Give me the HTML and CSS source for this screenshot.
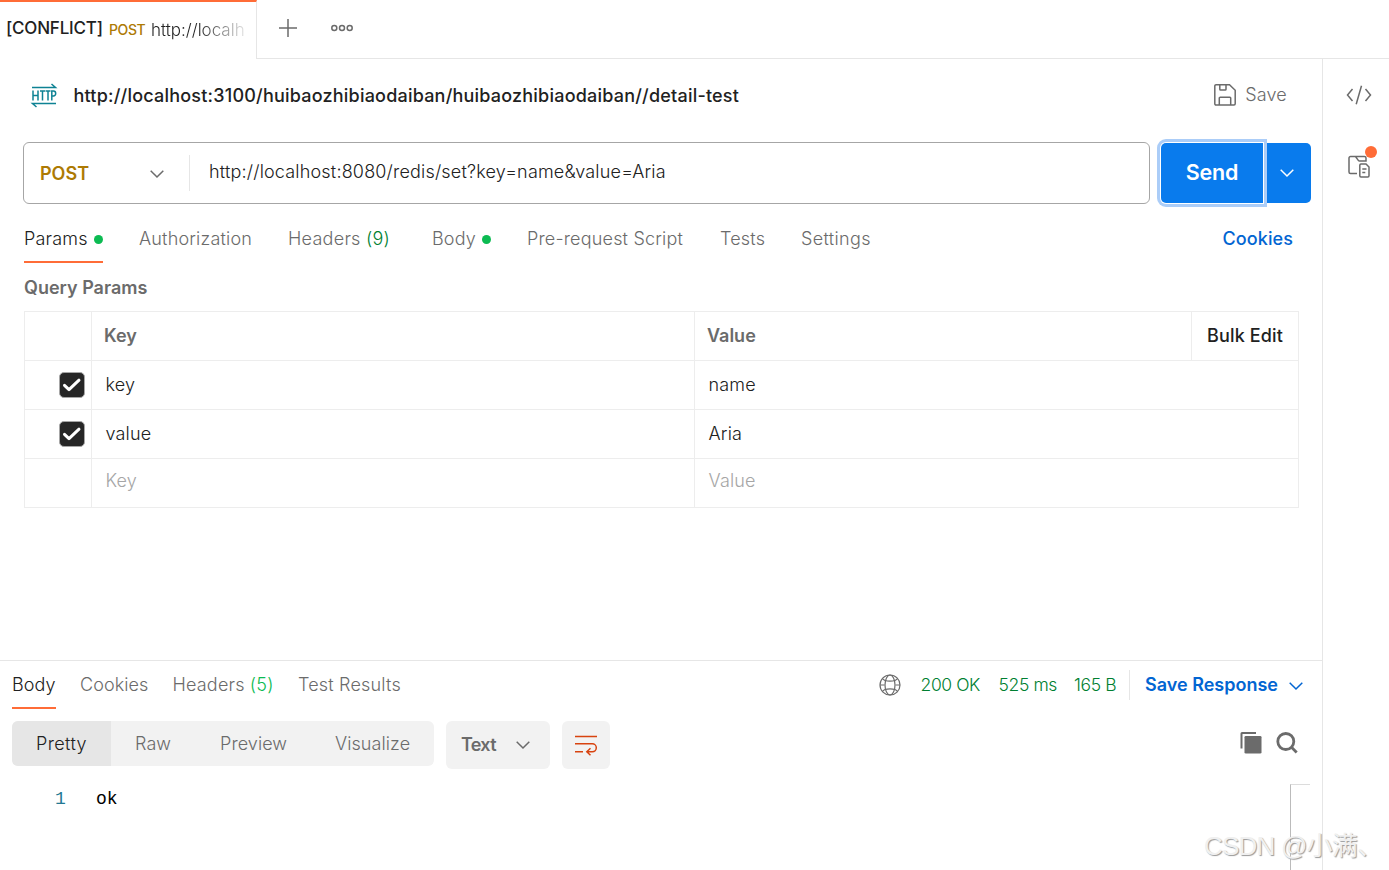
FILE: index.html
```html
<!DOCTYPE html>
<html lang="en">
<head>
<meta charset="utf-8">
<title>API client</title>
<link rel="stylesheet" href="styles.css">
</head>
<body>
<header class="tabbar">
  <div class="tab"><span class="conflict">[CONFLICT]</span><span class="tab-method">POST</span><span class="tab-url">http://localh</span></div>
  <div class="tab-actions">
    <svg class="plus" width="18" height="18" viewBox="0 0 18 18"><path d="M9 0v18M0 9h18"/></svg>
    <svg class="dots" width="22" height="8" viewBox="0 0 22 8"><circle cx="3.3" cy="4" r="2.5"/><circle cx="11" cy="4" r="2.5"/><circle cx="18.7" cy="4" r="2.5"/></svg>
  </div>
</header>
<div class="workspace">
  <main class="main">
    <section class="request">
      <div class="title-row">
        <svg class="http" width="26" height="26" viewBox="0 0 26 26"><path d="M1 4.500h23.500L20.500 1M25 20.500H1.500L5.500 24"/><path d="M2 7.500v10M7 7.500v10M2 12.500h5M9 8h5M11.500 8v9.500M14.500 8h5M17 8v9.500M20.800 17.500V8h1.700a2.200 2.500 0 0 1 0 5h-1.700"/></svg>
        <h1 class="title">http://localhost:3100/huibaozhibiaodaiban/huibaozhibiaodaiban//detail-test</h1>
        <div class="save"><svg width="22" height="22" viewBox="0 0 22 22"><path d="M2 .8h13.500l5.700 5.400v13.600a1.200 1.200 0 0 1-1.200 1.200H2A1.200 1.200 0 0 1 .8 19.800V2A1.200 1.200 0 0 1 2 .8zM5.800 1v4.200a.8.8 0 0 0 .8.8h4.600a.8.8 0 0 0 .8-.8V1M5.300 21v-7a.8.8 0 0 1 .8-.8h9.800a.8.8 0 0 1 .8.8v7"/></svg><span>Save</span></div>
      </div>
      <div class="url-row">
        <div class="url-box">
          <div class="method"><span>POST</span><svg class="chev" width="14" height="8" viewBox="0 0 14 8"><path d="M.7.700 7 7 13.300.700"/></svg></div>
          <div class="url">http://localhost:8080/redis/set?key=name&amp;value=Aria</div>
        </div>
        <div class="send-group">
          <div class="send">Send</div>
          <div class="send-more"><svg width="14" height="8" viewBox="0 0 14 8"><path d="M.7.700 7 7 13.300.700"/></svg></div>
        </div>
      </div>
      <nav class="req-tabs">
        <div class="rt active"><span class="t-params">Params</span><i class="dot"></i></div>
        <div class="rt t-auth">Authorization</div>
        <div class="rt t-headers">Headers <b>(9)</b></div>
        <div class="rt t-body"><span>Body</span><i class="dot"></i></div>
        <div class="rt t-pre">Pre-request Script</div>
        <div class="rt t-tests">Tests</div>
        <div class="rt t-settings">Settings</div>
        <div class="cookies">Cookies</div>
      </nav>
      <h2 class="subtitle">Query Params</h2>
      <div class="table">
        <div class="row head"><div></div><div>Key</div><div>Value</div><div class="bulk">Bulk Edit</div></div>
        <div class="row"><div class="check"><svg width="26" height="26" viewBox="0 0 26 26"><rect x=".5" y=".5" width="25" height="25" rx="4.500"/><path d="m5.500 13.300 4.500 4.300L20 8.200"/></svg></div><div>key</div><div>name</div></div>
        <div class="row"><div class="check"><svg width="26" height="26" viewBox="0 0 26 26"><rect x=".5" y=".5" width="25" height="25" rx="4.500"/><path d="m5.500 13.300 4.500 4.300L20 8.200"/></svg></div><div>value</div><div>Aria</div></div>
        <div class="row empty"><div></div><div>Key</div><div>Value</div></div>
      </div>
    </section>
    <section class="response">
      <div class="res-bar">
        <div class="res-tab s-body">Body</div>
        <div class="res-tab s-cookies">Cookies</div>
        <div class="res-tab s-headers">Headers <b>(5)</b></div>
        <div class="res-tab s-tests">Test Results</div>
        <div class="status">
          <svg class="globe" width="22" height="22" viewBox="0 0 22 22"><circle cx="11" cy="11" r="10"/><ellipse cx="11" cy="11" rx="5" ry="10"/><path d="M3.500 4.500C5.500 8 16.500 8 18.500 4.500M3.500 17.500c2-3.500 13-3.500 15 0M1 11h4.500M16.500 11H21"/></svg>
          <span class="code">200 OK</span><span class="time">525 ms</span><span class="size">165 B</span>
          <div class="save-res"><span>Save Response</span><svg width="14" height="8" viewBox="0 0 14 8"><path d="M.7.700 7 7 13.300.700"/></svg></div>
        </div>
      </div>
      <div class="tools">
        <div class="segmented"><span class="seg on">Pretty</span><span class="seg raw">Raw</span><span class="seg preview">Preview</span><span class="seg visualize">Visualize</span></div>
        <div class="format"><span>Text</span><svg class="chev" width="14" height="8" viewBox="0 0 14 8"><path d="M.7.700 7 7 13.300.700"/></svg></div>
        <div class="wrap"><svg width="22" height="20" viewBox="0 0 22 20"><path d="M0 1.500h22M0 8.800h17.300a4 4 0 0 1 0 8H12M0 16.800h8M15.500 13.300 11.800 16.800l3.700 3.500"/></svg></div>
        <div class="tool-icons">
          <svg width="22" height="22" viewBox="0 0 22 22"><path class="fill" d="M2 0h14v2H2.500v14.500H.5V1.500A1.500 1.500 0 0 1 2 0z"/><rect class="fill" x="4.500" y="4" width="17" height="17.500" rx="1.300"/></svg>
          <svg width="22" height="22" viewBox="0 0 22 22"><circle class="lens" cx="9.800" cy="9.500" r="8"/><path class="lens" d="m15.500 15.300 5.200 5.200"/></svg>
        </div>
      </div>
      <div class="editor"><span class="ln">1</span><span class="src">ok</span><div class="minimap"></div></div>
    </section>
  </main>
  <aside class="side">
    <svg width="26" height="20" viewBox="0 0 26 20"><path d="M6.500 4 1.500 10l5 6M19.500 4l5 6-5 6M15.500.8l-5.300 18.400"/></svg>
    <div class="docs"><svg width="24" height="24" viewBox="0 0 24 24"><path d="M11 18.500H4.500A1.500 1.500 0 0 1 3 17V3a1.500 1.500 0 0 1 1.500-1.500h14A1.500 1.500 0 0 1 20 3v3h-6.500a1.500 1.500 0 0 1-1.200-.6L9.500 1.500"/><path d="M15 9h5l3 3v8.800a1.200 1.200 0 0 1-1.200 1.200H15a1.200 1.200 0 0 1-1.200-1.200V10.200A1.200 1.200 0 0 1 15 9zM16.300 14h4.200M16.300 17.500h3"/></svg><i class="badge"></i></div>
  </aside>
</div>
<div class="watermark">CSDN <span class="handle">@小满、</span></div>
</body>
</html>
```
FILE: styles.css
```css
* { box-sizing: border-box; }
body { margin: 0; width: 1389px; height: 870px; overflow: hidden; position: relative; background: #fff; color: #212121; font: 350 18px/24px Inter, "Liberation Sans", sans-serif; letter-spacing: .18px; display: flex; flex-direction: column; }
h1, h2 { margin: 0; font-size: 18px; }
svg { display: block; flex: none; overflow: visible; fill: none; stroke: #6b6b6b; stroke-width: 1.5; }

.tabbar { display: flex; height: 59px; flex: none; }
.tab { width: 257px; border-top: 2px solid #ff6c37; border-right: 1px solid #e6e6e6; display: flex; padding: 14px 0 0 6px; white-space: nowrap; }
.conflict { width: 103px; font-size: 17px; font-weight: 500; letter-spacing: -.2px; }
.tab-method { width: 42px; padding-top: 2px; font-size: 14px; font-weight: 500; letter-spacing: -.4px; color: #ad7a03; }
.tab-url { padding-top: 2px; font-size: 17px; letter-spacing: 0; color: transparent; background: linear-gradient(90deg, #212121 50%, #e4e4e4 100%); background-clip: text; -webkit-background-clip: text; }
.tab-actions { flex: 1; border-bottom: 1px solid #e6e6e6; display: flex; align-items: center; gap: 34px; padding: 0 0 2px 22px; }

.workspace { flex: 1; display: flex; min-height: 0; }
.main { width: 1322px; display: flex; flex-direction: column; }
.request { height: 601px; flex: none; padding: 0 23px 0 24px; }
.title-row { height: 83px; display: flex; align-items: center; padding: 0 12px 10px 7px; }
.http { stroke: #0e8294; }
.title { margin-left: 16.5px; font-weight: 500; letter-spacing: .21px; }
.save { margin-left: auto; margin-top: -2px; display: flex; gap: 9px; align-items: center; color: #6b6b6b; }
.url-row { display: flex; margin: 0 -12px 0 -1px; height: 62px; justify-content: space-between; align-items: center; }
.url-box { width: 1127px; height: 62px; border: 1px solid #a6a6a6; border-radius: 6px; display: flex; align-items: center; }
.method { width: 166px; height: 36px; border-right: 1px solid #e6e6e6; display: flex; align-items: center; justify-content: space-between; padding: 2px 25px 0 16px; font-weight: 600; letter-spacing: 0; color: #ad7a03; }
.url { padding-left: 19px; margin-top: -3px; }
.send-group { display: flex; width: 150px; height: 60px; }
.send { width: 102px; background: #097bed; color: #fff; border-radius: 5px 0 0 5px; font-size: 21.5px; line-height: 59px; font-weight: 600; letter-spacing: -.2px; text-align: center; box-shadow: 0 0 0 1px #fff, 0 0 0 4px #abcdf8; z-index: 1; }
.send-more { flex: 1; background: #097bed; border-radius: 0 5px 5px 0; display: flex; align-items: center; justify-content: center; }
.send-more svg { stroke: #fff; }

.req-tabs { height: 59px; display: flex; color: #6b6b6b; padding-top: 23px; }
.rt { height: 36px; white-space: nowrap; flex: none; }
.rt.active { display: flex; width: 79px; margin-right: 36px; justify-content: space-between; color: #212121; border-bottom: 2px solid #ff6c37; }
.dot { width: 9px; height: 9px; border-radius: 50%; background: #0cbb52; flex: none; margin-top: 8px; }
.rt b { font-weight: 350; color: #007f31; }
.t-auth { width: 149px; }
.t-headers { width: 144px; letter-spacing: .26px; }
.t-body { width: 59px; margin-right: 36px; display: flex; justify-content: space-between; }
.t-pre { width: 193px; }
.t-tests { width: 81px; }
.t-settings { letter-spacing: .35px; }
.cookies { margin-left: auto; margin-right: 6px; color: #0265d2; font-weight: 500; letter-spacing: .1px; }
.subtitle { color: #6b6b6b; font-weight: 600; letter-spacing: 0; height: 48px; padding-top: 13px; }
.table { border: 1px solid #ededed; border-bottom: 0; width: 1275px; }
.row { display: grid; grid-template-columns: 66px 603px 1fr; height: 49px; border-bottom: 1px solid #ededed; }
.row > div { padding: 12px 0 0 13.5px; }
.row > div + div { border-left: 1px solid #ededed; }
.row.head { grid-template-columns: 66px 603px 497px 1fr; font-weight: 600; letter-spacing: 0; color: #6b6b6b; }
.row.head > div { padding-left: 12px; }
.row.head .bulk { color: #212121; font-weight: 500; padding-left: 15px; letter-spacing: .15px; }
.row .check { padding: 11px 0 0 34px; }
.check rect { fill: #262626; stroke: #a6a6a6; stroke-width: 1; }
.check path { stroke: #fff; stroke-width: 3; stroke-linecap: round; stroke-linejoin: round; }
.row.empty { color: #a6a6a6; }
.row.empty > div { padding-top: 10px; }

.response { flex: 1; border-top: 1px solid #e6e6e6; }
.res-bar { height: 48px; padding: 12px 19px 0 12px; display: flex; color: #6b6b6b; white-space: nowrap; }
.res-tab { height: 36px; }
.res-tab b { font-weight: 350; color: #0cbb52; }
.s-body { width: 44px; margin-right: 24px; letter-spacing: .08px; color: #212121; border-bottom: 2px solid #ff6c37; }
.s-cookies { width: 92.5px; letter-spacing: .08px; }
.s-headers { width: 125.5px; }
.status { margin-left: auto; display: flex; color: #007f31; }
.globe { margin: 1px 20px 0 0; stroke-width: 1.2; }
.code, .time, .size { font-size: 17.5px; letter-spacing: -.4px; }
.code { width: 78px; }
.time { width: 75.5px; }
.size { width: 55px; }
.save-res { height: 30px; margin-top: -3px; padding: 3px 0 0 15px; border-left: 1px solid #e6e6e6; color: #0265d2; font-weight: 600; letter-spacing: 0; display: flex; gap: 11px; }
.save-res svg { margin-top: 9px; stroke: #0265d2; }
.tools { display: flex; padding: 12px 24px 0 12px; color: #6b6b6b; }
.segmented { width: 422px; height: 45px; line-height: 45px; background: #f2f2f2; border-radius: 6px; overflow: hidden; display: flex; letter-spacing: .08px; }
.seg { padding-left: 24px; }
.seg.on { width: 99px; background: #e6e6e6; color: #212121; letter-spacing: .4px; }
.seg.raw { width: 85px; }
.seg.preview { width: 115px; }
.format { width: 104px; height: 48px; margin-left: 12px; background: #f2f2f2; border-radius: 6px; display: flex; align-items: center; justify-content: space-between; padding: 0 20px 0 15px; font-weight: 600; letter-spacing: -.7px; }
.wrap { width: 48px; height: 48px; margin-left: 12px; background: #f2f2f2; border-radius: 6px; display: grid; place-items: center; }
.wrap svg { stroke: #d8430f; }
.tool-icons { margin: 11px 0 0 auto; display: flex; gap: 14px; }
.fill { fill: #6b6b6b; stroke: none; }
.lens { stroke-width: 2.8; }
.editor { display: flex; height: 101px; padding: 17px 12px 0 55px; font: 18px/26px "Liberation Mono", monospace; letter-spacing: 0; }
.ln { width: 41px; color: #237893; }
.src { color: #000; }
.minimap { width: 20px; height: 86px; margin: -2px 0 0 auto; border-top: 1px solid #dcdcdc; border-left: 1px solid #bbb; }

.side { flex: 1; border-left: 1px solid #e6e6e6; padding: 26px 0 0 23px; }
.docs { position: relative; margin-top: 50px; }
.badge { position: absolute; left: 19px; top: -9px; width: 12px; height: 12px; border-radius: 50%; background: #ff6c37; }
.watermark { position: absolute; left: 1204px; top: 831px; font: 26px/30px "Liberation Sans", "Noto Sans CJK SC", sans-serif; letter-spacing: -.8px; color: #f0f0f0; text-shadow: 1px 1px 1px #999; white-space: nowrap; }
```
